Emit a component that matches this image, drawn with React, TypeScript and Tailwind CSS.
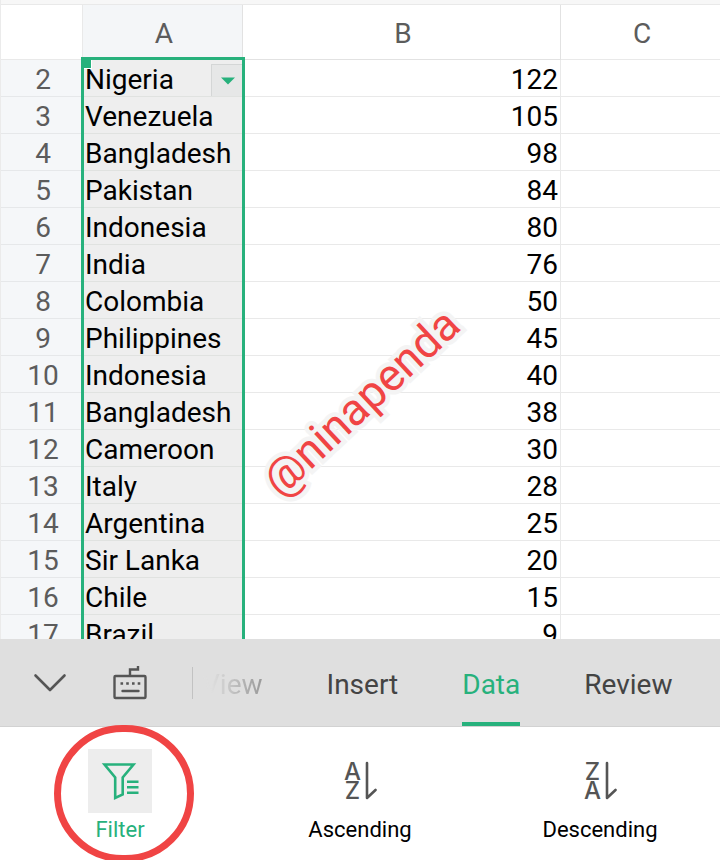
import { useState } from 'react'
import clsx from 'clsx'

const ROWS = [
  { country: 'Nigeria', value: 122 },
  { country: 'Venezuela', value: 105 },
  { country: 'Bangladesh', value: 98 },
  { country: 'Pakistan', value: 84 },
  { country: 'Indonesia', value: 80 },
  { country: 'India', value: 76 },
  { country: 'Colombia', value: 50 },
  { country: 'Philippines', value: 45 },
  { country: 'Indonesia', value: 40 },
  { country: 'Bangladesh', value: 38 },
  { country: 'Cameroon', value: 30 },
  { country: 'Italy', value: 28 },
  { country: 'Argentina', value: 25 },
  { country: 'Sir Lanka', value: 20 },
  { country: 'Chile', value: 15 },
  { country: 'Brazil', value: 9 },
]

const TABS = ['Insert', 'Data', 'Review']

function ChevronIcon() {
  return (
    <svg width="40" height="40" viewBox="0 0 40 40" fill="none" stroke="#555" strokeWidth="2.6" strokeLinecap="round" strokeLinejoin="round">
      <path d="M5.5 12.5 20 27l14.5-14.5" />
    </svg>
  )
}

function KeyboardIcon() {
  return (
    <svg width="40" height="40" viewBox="0 0 40 40" fill="none" stroke="#555" strokeWidth="2.4">
      <rect x="4.5" y="13" width="31" height="22" rx="1" />
      <path d="M20 13V6.5h8V3" />
      <path d="M10.5 20.5h2.6M16.2 20.5h2.6M22 20.5h2.6M27.7 20.5h2.6" strokeWidth="2.6" />
      <path d="M12.5 28h16" strokeLinecap="round" />
    </svg>
  )
}

function FilterIcon() {
  return (
    <svg width="64" height="64" viewBox="0 0 64 64" fill="none" stroke="#27b17c" strokeWidth="2.6">
      <path d="M16.5 15.5h29L34.7 28.5v17l-7.5 3.5V28.5z" />
      <path d="M39 32.7h11.5M39 38.3h11.5M39 43.8h11.5" />
    </svg>
  )
}

function SortIcon({ top, bottom }: { top: string; bottom: string }) {
  return (
    <svg width="64" height="64" viewBox="0 0 64 64" aria-hidden="true">
      <g className="font-[Inter,sans-serif]" fill="#555" fontSize="24" fontWeight="500" textAnchor="middle">
        <text x="24.5" y="30.5">{top}</text>
        <text x="24.5" y="50">{bottom}</text>
      </g>
      <path d="M39 14v35l8.5-8" fill="none" stroke="#555" strokeWidth="2.6" strokeLinecap="round" strokeLinejoin="round" />
    </svg>
  )
}

function Sheet() {
  return (
    <main className="relative min-h-0 flex-1 overflow-hidden border-l border-[#ebebeb]">
      <div className="h-[5px] border-b border-[#e9e9e9] bg-[#f7f7f7]" />
      <table className="w-full table-fixed border-separate border-spacing-0 text-[28px] leading-8">
        <colgroup>
          <col className="w-[82px]" />
          <col className="w-40" />
          <col className="w-[318px]" />
          <col />
        </colgroup>
        <thead>
          <tr className="h-[55px] text-[#5c5c5c]">
            <td className="border-r border-b border-[#e9e9e9] p-0" />
            <th scope="col" className="border-r border-b border-[#e2e2e2] bg-[#f4f6f8] p-0 pt-1 pl-[3px] font-normal">A</th>
            <th scope="col" className="border-r border-b border-[#e2e2e2] p-0 pt-1 pl-[3px] font-normal">B</th>
            <th scope="col" className="border-b border-[#e9e9e9] p-0 pt-1 pl-[3px] font-normal">C</th>
          </tr>
        </thead>
        <tbody>
          {ROWS.map((row, i) => (
            <tr key={i} className="h-[37px]">
              <th scope="row" className="border-b border-[#e6e8ea] bg-[#f5f7f9] p-0 pt-1 pl-[2px] font-normal text-[#5c5c5c]">
                {i + 2}
              </th>
              <td className="border-b border-[#e0e2e0] bg-[#eee] p-0 pt-1 pl-[2px] whitespace-nowrap text-black">
                {i === 0 ? (
                  <div className="flex justify-between">
                    {row.country}
                    <button
                      type="button"
                      aria-label="Filter column A"
                      className="flex h-8 w-8 items-center justify-center border-t border-l border-[#d4d6d6] bg-[#e6e7e7]"
                    >
                      <svg width="14" height="8" viewBox="0 0 14 8" fill="#27b17c">
                        <path d="M0 .5h14l-7 7z" />
                      </svg>
                    </button>
                  </div>
                ) : (
                  row.country
                )}
              </td>
              <td className="border-r border-b border-[#e9e9e9] p-0 pt-1 pr-[2px] text-right text-black">{row.value}</td>
              <td className="border-b border-[#e9e9e9] p-0" />
            </tr>
          ))}
        </tbody>
      </table>

      {/* selection frame and its drag handle */}
      <div className="pointer-events-none absolute top-[57px] -bottom-1 left-20 w-[164px] border-[3px] border-[#27b17c]">
        <div className="h-[9px] w-2 border-r border-b border-white bg-[#27b17c]" />
      </div>

      <p className="pointer-events-none absolute top-[402px] left-[360px] -translate-x-1/2 -translate-y-1/2 -rotate-43 text-[45px] leading-none text-[#f04444] [-webkit-text-stroke:9px_#f4f4f4] [paint-order:stroke_fill]">
        @ninapenda
      </p>
    </main>
  )
}

export default function App() {
  const [tab, setTab] = useState('Data')

  return (
    <div className="flex h-screen flex-col overflow-hidden bg-white font-[Roboto,sans-serif]">
      <Sheet />

      <nav className="flex h-[88px] shrink-0 items-center border-b border-[#d2d2d2] bg-[#dfdfdf] pl-[10px] text-[28px]">
        <button type="button" aria-label="Collapse" className="flex w-20 justify-center">
          <ChevronIcon />
        </button>
        <button type="button" aria-label="Keyboard" className="flex w-20 justify-center">
          <KeyboardIcon />
        </button>
        <div className="ml-[22px] h-8 w-px bg-[#c2c2c2]" />
        <div className="ml-[9px] flex h-full flex-1 gap-16 overflow-hidden">
          <button
            type="button"
            className="bg-linear-to-r from-[#dfdfdf] from-15% to-[#999] bg-clip-text pt-1 text-transparent"
          >
            View
          </button>
          {TABS.map((name) => (
            <button
              key={name}
              type="button"
              onClick={() => setTab(name)}
              className={clsx(
                'border-y-4 border-t-transparent pt-1',
                tab === name ? 'border-b-[#27b17c] text-[#27b17c]' : 'border-b-transparent text-[#444]',
              )}
            >
              {name}
            </button>
          ))}
        </div>
      </nav>

      <section className="grid shrink-0 grid-cols-3 pt-[22px] pb-[13px] text-[22px] leading-[34px] text-black">
        <button type="button" className="relative flex flex-col items-center text-[#27b17c]">
          <span className="bg-[#ededed]">
            <FilterIcon />
          </span>
          Filter
          <span className="pointer-events-none absolute -top-6 left-1/2 ml-1 h-[137px] w-[140px] -translate-x-1/2 rounded-full border-[7px] border-[#f04444]" />
        </button>
        <button type="button" className="flex flex-col items-center">
          <SortIcon top="A" bottom="Z" />
          Ascending
        </button>
        <button type="button" className="flex flex-col items-center">
          <SortIcon top="Z" bottom="A" />
          Descending
        </button>
      </section>
    </div>
  )
}
